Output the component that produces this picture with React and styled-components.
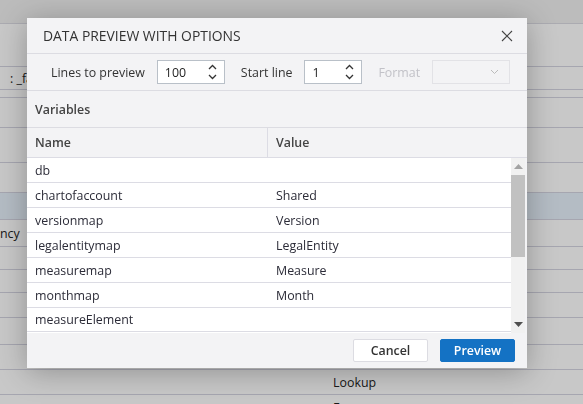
import React from "react";
import styled, { createGlobalStyle } from "styled-components";

const GlobalStyle = createGlobalStyle`
  html, body {
    margin: 0;
    padding: 0;
    height: 100%;
    overflow: hidden;
  }
  body {
    font-family: "Open Sans", "Liberation Sans", sans-serif;
    font-size: 12.4px;
    color: #333;
    background: #fafafa;
  }
`;

const bgRows = [
  { h: 43, text: "" },
  { h: 23, text: ": _fa", x: 10 },
  { h: 8, text: "" },
  { h: 30, text: "" },
  { h: 35, text: "" },
  { h: 30, text: "" },
  { h: 27, text: "", selected: true },
  { h: 27, text: "ncy", x: 0 },
  { h: 23, text: "" },
  { h: 23, text: "" },
  { h: 25, text: "" },
  { h: 27, text: "" },
  { h: 25, text: "" },
  { h: 25, text: "Lookup", x: 333 },
  { h: 25, text: "F", x: 333 },
];

const variables = [
  { name: "db", value: "" },
  { name: "chartofaccount", value: "Shared" },
  { name: "versionmap", value: "Version" },
  { name: "legalentitymap", value: "LegalEntity" },
  { name: "measuremap", value: "Measure" },
  { name: "monthmap", value: "Month" },
  { name: "measureElement", value: "" },
];

function Spinner() {
  return (
    <SpinBox>
      <svg width="9" height="18" viewBox="0 0 9 18">
        <path d="M1 6 L4.5 2.5 L8 6" fill="none" stroke="#333" strokeWidth="1.3" />
        <path d="M1 12 L4.5 15.5 L8 12" fill="none" stroke="#333" strokeWidth="1.3" />
      </svg>
    </SpinBox>
  );
}

function NumberField({ value, width }) {
  return (
    <Field $width={width}>
      <span>{value}</span>
      <Spinner />
    </Field>
  );
}

export default function App() {
  return (
    <>
      <GlobalStyle />
      <Page>
        <TopBar />
        {bgRows.map((r, i) => (
          <BgRow key={i} $h={r.h} $selected={r.selected}>
            {r.text && <BgText style={{ marginLeft: r.x }}>{r.text}</BgText>}
          </BgRow>
        ))}
      </Page>
      <Overlay />
      <Dialog>
        <Header>
          <Title>Data preview with options</Title>
          <Close>
            <svg width="12" height="12" viewBox="0 0 12 12">
              <path d="M1 1 L11 11 M11 1 L1 11" stroke="#444" strokeWidth="1.1" />
            </svg>
          </Close>
        </Header>
        <Toolbar>
          <Label>Lines to preview</Label>
          <NumberField value="100" width={68} />
          <Label $gap>Start line</Label>
          <NumberField value="1" width={58} />
          <Label $gap $disabled>Format</Label>
          <Select>
            <svg width="9" height="6" viewBox="0 0 9 6">
              <path d="M1 1 L4.5 4.5 L8 1" fill="none" stroke="#bbb" strokeWidth="1" />
            </svg>
          </Select>
        </Toolbar>
        <Section>Variables</Section>
        <Table>
          <HeadRow>
            <HeadCell>Name</HeadCell>
            <HeadCell $divider>Value</HeadCell>
          </HeadRow>
          <Body>
            <Rows>
              {variables.map((v) => (
                <Row key={v.name}>
                  <Cell>{v.name}</Cell>
                  <Cell $value>{v.value}</Cell>
                </Row>
              ))}
            </Rows>
            <ScrollBar>
              <Arrow>
                <svg width="9" height="5" viewBox="0 0 9 5">
                  <path d="M0 5 L4.5 0 L9 5 Z" fill="#a3a3a3" />
                </svg>
              </Arrow>
              <Thumb />
              <Arrow $down>
                <svg width="9" height="5" viewBox="0 0 9 5">
                  <path d="M0 0 L4.5 5 L9 0 Z" fill="#505050" />
                </svg>
              </Arrow>
            </ScrollBar>
          </Body>
        </Table>
        <Footer>
          <Button>Cancel</Button>
          <Button $primary>Preview</Button>
        </Footer>
      </Dialog>
    </>
  );
}

const Page = styled.div`
  width: 583px;
  height: 404px;
  background: #fbfbfb;
  overflow: hidden;
`;

const TopBar = styled.div`
  height: 24px;
  background: #ececec;
  border-bottom: 1px solid #d6d6de;
  box-sizing: border-box;
`;

const BgRow = styled.div`
  height: ${(p) => p.$h}px;
  box-sizing: border-box;
  border-bottom: 1px solid #d0d0dc;
  background: ${(p) => (p.$selected ? "#e2ecf6" : "#fbfbfb")};
  display: flex;
  align-items: center;
`;

const BgText = styled.span`
  font-size: 12.4px;
  color: #222;
`;

const Overlay = styled.div`
  position: fixed;
  inset: 0;
  background: rgba(0, 0, 0, 0.2);
`;

const Dialog = styled.div`
  position: absolute;
  left: 27px;
  top: 18px;
  width: 500px;
  height: 350px;
  background: #f3f3f5;
  box-shadow: 0 4px 28px rgba(0, 0, 0, 0.28);
  display: flex;
  flex-direction: column;
`;

const Header = styled.div`
  height: 35px;
  border-bottom: 1px solid #dcdce2;
  display: flex;
  align-items: center;
  justify-content: space-between;
  padding: 0 14px 0 16px;
`;

const Title = styled.div`
  font-size: 13.9px;
  text-transform: uppercase;
  color: #333;
`;

const Close = styled.div`
  display: flex;
  align-items: center;
  padding-top: 1px;
`;

const Toolbar = styled.div`
  height: 36px;
  border-bottom: 1px solid #dcdce2;
  display: flex;
  align-items: center;
  padding-left: 24px;
`;

const Label = styled.span`
  color: ${(p) => (p.$disabled ? "#c2c2c8" : "#333")};
  margin-right: 12px;
  margin-left: ${(p) => (p.$gap ? "16px" : "0")};
`;

const Field = styled.div`
  width: ${(p) => p.$width}px;
  height: 24px;
  box-sizing: border-box;
  border: 1px solid #b9c0c8;
  background: #fff;
  display: flex;
  align-items: center;
  justify-content: space-between;
  padding: 0 7px;
  color: #222;
`;

const SpinBox = styled.div`
  display: flex;
  align-items: center;
`;

const Select = styled.div`
  width: 78px;
  height: 24px;
  box-sizing: border-box;
  border: 1px solid #e2e2e6;
  display: flex;
  align-items: center;
  justify-content: flex-end;
  padding-right: 10px;
`;

const Section = styled.div`
  height: 36px;
  border-bottom: 1px solid #dcdce2;
  display: flex;
  align-items: center;
  padding-left: 8px;
  font-weight: 600;
  color: #444;
`;

const Table = styled.div`
  display: flex;
  flex-direction: column;
`;

const HeadRow = styled.div`
  height: 29px;
  display: flex;
  border-bottom: 1px solid #dcdce4;
`;

const HeadCell = styled.div`
  box-sizing: border-box;
  width: ${(p) => (p.$divider ? "auto" : "240px")};
  flex: ${(p) => (p.$divider ? 1 : "none")};
  display: flex;
  align-items: center;
  padding-left: 8px;
  font-weight: 600;
  color: #444;
  border-left: ${(p) => (p.$divider ? "1px solid #dcdce4" : "none")};
`;

const Body = styled.div`
  display: flex;
  height: 175px;
  padding-right: 2px;
`;

const Rows = styled.div`
  flex: 1;
  background: #fff;
`;

const Row = styled.div`
  height: 25px;
  box-sizing: border-box;
  display: flex;
  align-items: center;
  border-bottom: 1px solid #dcdce4;
  &:last-child {
    height: 24px;
  }
`;

const Cell = styled.div`
  box-sizing: border-box;
  width: ${(p) => (p.$value ? "auto" : "241px")};
  flex: ${(p) => (p.$value ? 1 : "none")};
  padding-left: 8px;
  color: #2c2c38;
`;

const ScrollBar = styled.div`
  width: 14px;
  background: #f1f1f1;
  display: flex;
  flex-direction: column;
  align-items: center;
`;

const Arrow = styled.div`
  height: 17px;
  display: flex;
  align-items: center;
  justify-content: center;
  margin-top: ${(p) => (p.$down ? "auto" : "0")};
`;

const Thumb = styled.div`
  width: 14px;
  height: 82px;
  background: #c1c1c1;
`;

const Footer = styled.div`
  flex: 1;
  display: flex;
  align-items: center;
  justify-content: flex-end;
  gap: 12px;
  padding-right: 12px;
`;

const Button = styled.button`
  height: 23px;
  width: 75px;
  box-sizing: border-box;
  font-family: inherit;
  font-size: 12.4px;
  font-weight: 600;
  border-radius: 2px;
  border: 1px solid ${(p) => (p.$primary ? "#1472c4" : "#dcdce2")};
  background: ${(p) => (p.$primary ? "#1472c4" : "#fff")};
  color: ${(p) => (p.$primary ? "#fff" : "#333")};
  padding: 0;
`;
